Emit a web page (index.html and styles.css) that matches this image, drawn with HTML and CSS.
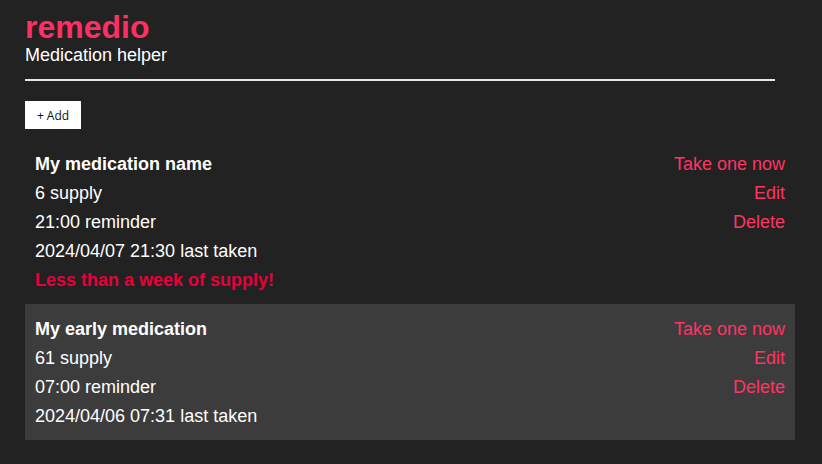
FILE: index.html
```html
<!DOCTYPE html>
<html>
<head>
<meta charset="utf-8">
<link rel="stylesheet" href="styles.css">
</head>
<body>
<main class="app">
  <header class="header">
    <h1 class="title">remedio</h1>
    <p class="subtitle">Medication helper</p>
  </header>
  <button class="add">+ Add</button>
  <ul class="list">
    <li class="card">
      <div class="info">
        <div class="row name">My medication name</div>
        <div class="row">6 supply</div>
        <div class="row">21:00 reminder</div>
        <div class="row">2024/04/07 21:30 last taken</div>
        <div class="row warn">Less than a week of supply!</div>
      </div>
      <div class="actions">
        <a class="row action">Take one now</a>
        <a class="row action">Edit</a>
        <a class="row action">Delete</a>
      </div>
    </li>
    <li class="card alt">
      <div class="info">
        <div class="row name">My early medication</div>
        <div class="row">61 supply</div>
        <div class="row">07:00 reminder</div>
        <div class="row">2024/04/06 07:31 last taken</div>
      </div>
      <div class="actions">
        <a class="row action">Take one now</a>
        <a class="row action">Edit</a>
        <a class="row action">Delete</a>
      </div>
    </li>
  </ul>
</main>
</body>
</html>
```
FILE: styles.css
```css
html, body {
  margin: 0;
  padding: 0;
  background: #222222;
  color: #ffffff;
  font-family: "Liberation Sans", Arial, sans-serif;
}
.app {
  width: 770px;
  padding: 10px 0 0 25px;
}
.header {
  width: 750px;
  border-bottom: 2px solid #e8e8e8;
  padding-bottom: 12px;
}
.title {
  margin: 0;
  font-size: 32px;
  line-height: 34px;
  font-weight: bold;
  color: #ff2e63;
}
.subtitle {
  margin: 0;
  font-size: 18px;
  line-height: 23px;
}
.add {
  display: block;
  margin: 20px 0 10px 0;
  height: 28px;
  width: 56px;
  padding: 0;
  border: none;
  background: #ffffff;
  color: #111111;
  font-family: "Open Sans", "Noto Sans", sans-serif;
  font-size: 12px;
}
.list {
  list-style: none;
  margin: 0;
  padding: 0;
}
.card {
  display: flex;
  justify-content: space-between;
  padding: 11px 10px 9px 10px;
}
.card.alt {
  background: #3c3c3c;
}
.info, .actions {
  display: flex;
  flex-direction: column;
}
.actions {
  align-items: flex-end;
}
.row {
  font-size: 18px;
  line-height: 29px;
  height: 29px;
}
.name {
  font-weight: bold;
}
.warn {
  font-weight: bold;
  color: #e6003c;
}
.action {
  color: #ff3366;
  cursor: pointer;
}
```
